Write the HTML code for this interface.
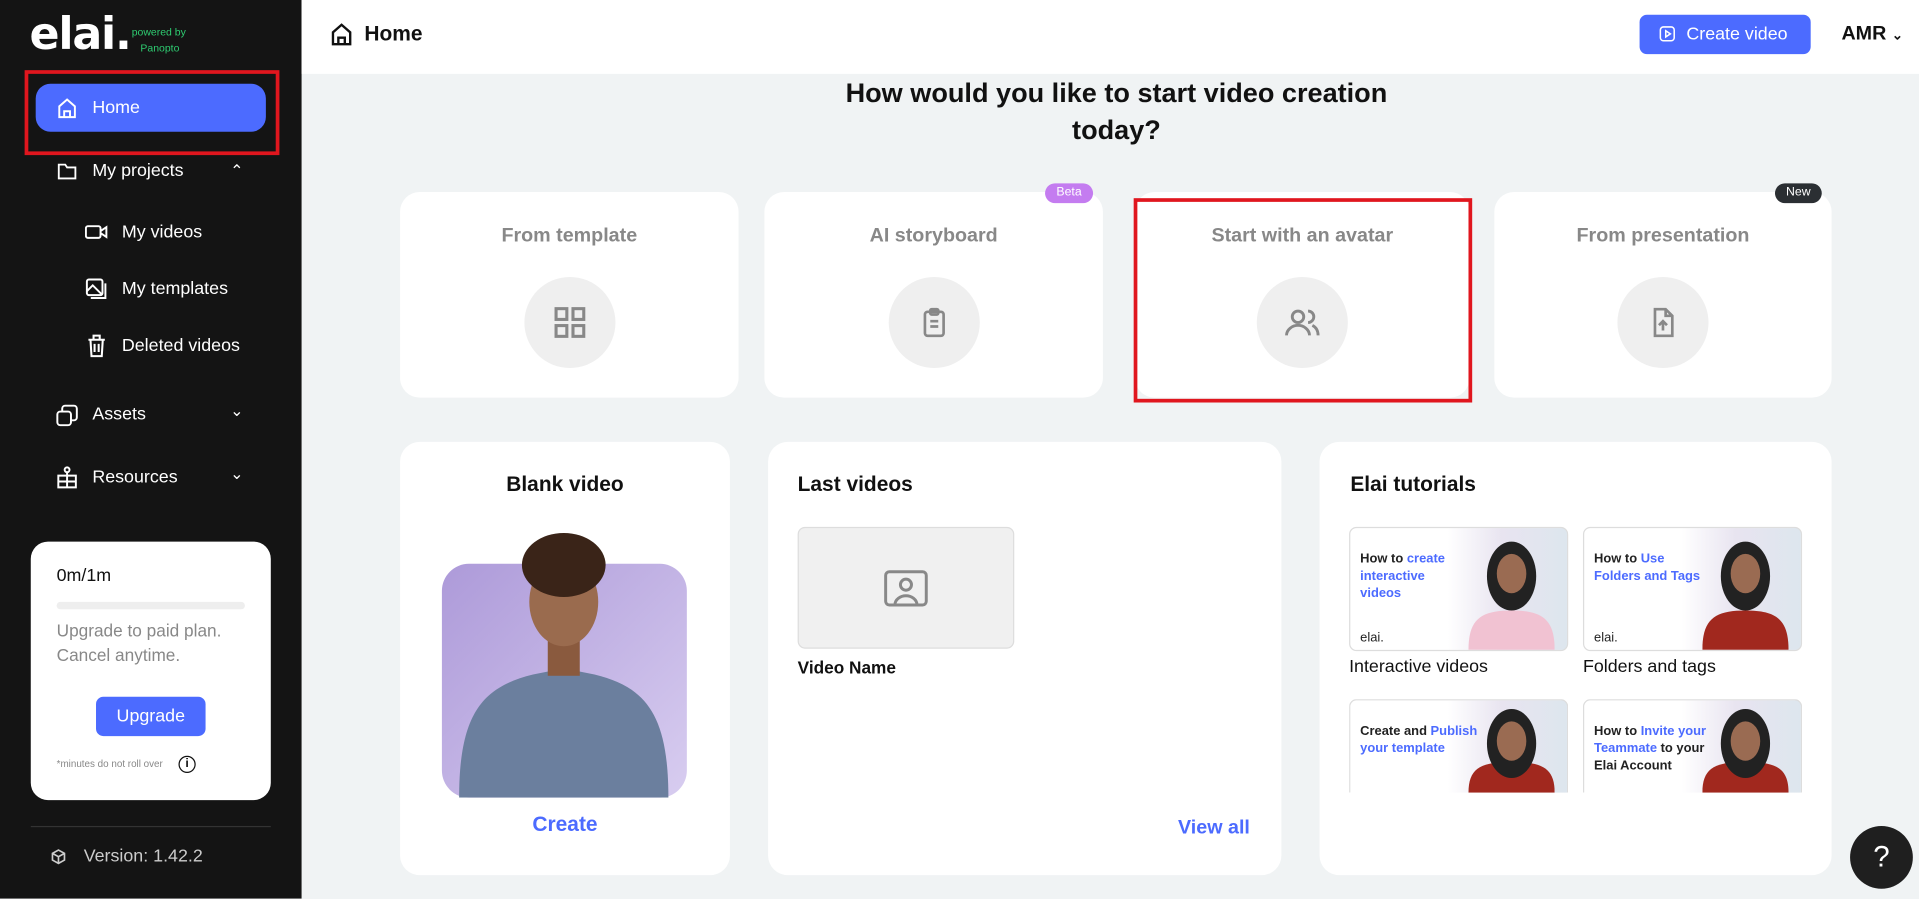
<!DOCTYPE html>
<html><head><meta charset="utf-8">
<style>
*{box-sizing:border-box;margin:0;padding:0}
html,body{width:1919px;height:894px;overflow:hidden;background:#f0f3f4;font-family:"Liberation Sans",sans-serif}
#w{position:absolute;left:0;top:0;width:1559px;height:730px;transform:scale(1.23092);transform-origin:0 0;background:#f0f3f4}
.a{position:absolute}
.sb{left:0;top:0;width:245px;height:730px;background:#141414;color:#fff}
.nav{font-size:14.5px;color:#fff}
.card{background:#fff;border-radius:16px;position:absolute}
.ct{font-size:16px;font-weight:bold;color:#888;width:100%;text-align:center;position:absolute;top:27px}
.circ{position:absolute;width:74px;height:74px;border-radius:50%;background:#efefef;left:50%;margin-left:-37px;top:69px;display:flex;align-items:center;justify-content:center}
.h{font-size:17px;font-weight:bold;color:#111}
.tut{position:absolute;width:178px;height:101px;border:1px solid #ddd;border-radius:6px;background:linear-gradient(90deg,#fff 45%,#e8e4f0 70%,#dde6ee);overflow:hidden;font-size:10.5px;font-weight:bold;color:#222;line-height:14px}
.tut .t{position:absolute;left:8px;top:18px;width:82px}
.tut b{color:#4c6bff}
.p{position:absolute;right:10px;bottom:0;width:70px;height:90px}
</style></head><body><div id="w">
<div class="a sb">
 <div class="a" style="left:24px;top:8px;font-size:36px;font-weight:bold;letter-spacing:-1px;font-family:'DejaVu Sans',sans-serif">elai.</div>
 <div class="a" style="left:107px;top:20px;font-size:8.5px;color:#2ecc71;line-height:13px">powered by<br>&nbsp;&nbsp;&nbsp;Panopto</div>
 <div class="a" style="left:20px;top:57px;width:207px;height:69px;border:3px solid #e0161e"></div>
 <div class="a" style="left:29px;top:68px;width:187px;height:39px;background:#4c6bff;border-radius:12px"></div>
 <svg class="a" style="left:45px;top:78px" width="19" height="20" viewBox="0 0 24 24" fill="none" stroke="#fff" stroke-width="2"><path d="M4 21V10l8-7 8 7v11zM9 21v-6h6v6"/></svg>
 <div class="a nav" style="left:75px;top:80px">Home</div>
 <svg class="a" style="left:45px;top:130px" width="19" height="18" viewBox="0 0 24 24" fill="none" stroke="#fff" stroke-width="2"><path d="M3 5h7l2 3h9v12H3z"/></svg>
 <div class="a nav" style="left:75px;top:131px">My projects</div>
 <div class="a nav" style="left:187px;top:131px;font-size:13px">&#8963;</div>
 <svg class="a" style="left:69px;top:181px" width="19" height="15" viewBox="0 0 24 18" fill="none" stroke="#fff" stroke-width="2"><rect x="1" y="3" width="15" height="12" rx="2"/><path d="M16 8l6-4v10l-6-4"/></svg>
 <div class="a nav" style="left:99px;top:181px">My videos</div>
 <svg class="a" style="left:69px;top:225px" width="19" height="20" viewBox="0 0 24 24" fill="none" stroke="#fff" stroke-width="2"><rect x="2" y="2" width="16" height="16" rx="2"/><path d="M2 14l6-6 10 10M21 6v15H6"/></svg>
 <div class="a nav" style="left:99px;top:227px">My templates</div>
 <svg class="a" style="left:70px;top:271px" width="17" height="20" viewBox="0 0 20 24" fill="none" stroke="#fff" stroke-width="2"><path d="M2 6h16M7 6V2h6v4M4 6l1 16h10l1-16M8 10v8M12 10v8"/></svg>
 <div class="a nav" style="left:99px;top:273px">Deleted videos</div>
 <svg class="a" style="left:45px;top:328px" width="19" height="19" viewBox="0 0 24 24" fill="none" stroke="#fff" stroke-width="2"><rect x="2" y="8" width="14" height="14" rx="3"/><path d="M7 8V5a3 3 0 013-3h9a3 3 0 013 3v9a3 3 0 01-3 3h-3"/></svg>
 <div class="a nav" style="left:75px;top:329px">Assets</div>
 <div class="a nav" style="left:187px;top:326px;font-size:13px">&#8964;</div>
 <svg class="a" style="left:45px;top:378px" width="19" height="20" viewBox="0 0 24 24" fill="none" stroke="#fff" stroke-width="2"><circle cx="12" cy="4" r="2.5"/><path d="M3 10h18v12H3zM12 7v15M3 16h18"/></svg>
 <div class="a nav" style="left:75px;top:380px">Resources</div>
 <div class="a nav" style="left:187px;top:377px;font-size:13px">&#8964;</div>
 <div class="a" style="left:25px;top:440px;width:195px;height:210px;background:#fff;border-radius:14px;color:#111">
  <div class="a" style="left:21px;top:20px;font-size:14.5px">0m/1m</div>
  <div class="a" style="left:21px;top:49px;width:153px;height:6px;background:#eee;border-radius:3px"></div>
  <div class="a" style="left:21px;top:62px;font-size:14px;color:#888;line-height:20px">Upgrade to paid plan.<br>Cancel anytime.</div>
  <div class="a" style="left:53px;top:126px;width:89px;height:32px;background:#4c6bff;border-radius:6px;color:#fff;font-size:14.5px;text-align:center;line-height:32px">Upgrade</div>
  <div class="a" style="left:21px;top:176px;font-size:8px;color:#888">*minutes do not roll over</div>
  <div class="a" style="left:120px;top:174px;width:14px;height:14px;border:1.5px solid #111;border-radius:50%;font-size:10px;font-weight:bold;text-align:center;line-height:11px">i</div>
 </div>
 <div class="a" style="left:25px;top:671px;width:195px;height:1px;background:#333"></div>
 <svg class="a" style="left:41px;top:689px" width="13" height="14" viewBox="0 0 24 24" fill="none" stroke="#ccc" stroke-width="2.5"><path d="M12 2l9 5v10l-9 5-9-5V7zM3 7l9 5 9-5M12 12v10"/></svg>
 <div class="a" style="left:68px;top:688px;font-size:14.5px;color:#ccc">Version: 1.42.2</div>
</div>
<div class="a" style="left:245px;top:0;width:1314px;height:60px;background:#fff"></div>
<svg class="a" style="left:267px;top:17px" width="21" height="22" viewBox="0 0 24 24" fill="none" stroke="#111" stroke-width="2.2"><path d="M4 21V10l8-7 8 7v11zM9 21v-6h6v6"/></svg>
<div class="a h" style="left:296px;top:18px">Home</div>
<div class="a" style="left:1332px;top:12px;width:139px;height:32px;background:#4c6bff;border-radius:6px;color:#fff;font-size:14.5px;line-height:32px;padding-left:38px">Create video</div>
<svg class="a" style="left:1347px;top:20px" width="15" height="15" viewBox="0 0 24 24" fill="none" stroke="#fff" stroke-width="2"><rect x="3" y="3" width="18" height="18" rx="4"/><path d="M10 8l6 4-6 4z"/></svg>
<div class="a" style="left:1496px;top:19px;font-size:16px;font-weight:bold;color:#111">AMR <span style="font-size:11px">&#8964;</span></div>
<div class="a" style="left:600px;top:61px;width:614px;text-align:center;font-size:22px;font-weight:bold;color:#111;line-height:30px">How would you like to start video creation<br>today?</div>

<div class="card" style="left:325px;top:156px;width:275px;height:167px"><div class="ct">From template</div><div class="circ"><svg width="30" height="30" viewBox="0 0 24 24" fill="none" stroke="#888" stroke-width="2"><rect x="3" y="3" width="7" height="7"/><rect x="14" y="3" width="7" height="7"/><rect x="3" y="14" width="7" height="7"/><rect x="14" y="14" width="7" height="7"/></svg></div></div>
<div class="card" style="left:621px;top:156px;width:275px;height:167px"><div class="ct">AI storyboard</div><div class="circ"><svg width="26" height="28" viewBox="0 0 24 24" fill="none" stroke="#888" stroke-width="2"><rect x="5" y="4" width="14" height="18" rx="2"/><rect x="9" y="2" width="6" height="4" rx="1"/><path d="M9 11h6M9 15h6"/></svg></div></div>
<div class="a" style="left:849px;top:149px;width:39px;height:16px;background:#c47cf0;border-radius:8px;color:#fff;font-size:10px;text-align:center;line-height:16px">Beta</div>
<div class="card" style="left:922px;top:156px;width:272px;height:167px"><div class="ct">Start with an avatar</div><div class="circ"><svg width="32" height="28" viewBox="0 0 26 24" fill="none" stroke="#888" stroke-width="2"><circle cx="10" cy="8" r="4"/><path d="M2 21c0-4 4-7 8-7s8 3 8 7M17 4a4 4 0 010 8M20 14c2 1 4 3 4 7"/></svg></div></div>
<div class="a" style="left:921px;top:161px;width:275px;height:166px;border:3px solid #e0161e"></div>
<div class="card" style="left:1214px;top:156px;width:274px;height:167px"><div class="ct">From presentation</div><div class="circ"><svg width="26" height="28" viewBox="0 0 24 24" fill="none" stroke="#888" stroke-width="2"><path d="M6 2h8l5 5v15H6zM14 2v5h5M12 18v-7M9 14l3-3 3 3"/></svg></div></div>
<div class="a" style="left:1442px;top:149px;width:38px;height:16px;background:#2b2f33;border-radius:8px;color:#fff;font-size:10px;text-align:center;line-height:16px">New</div>

<div class="card" style="left:325px;top:359px;width:268px;height:352px">
 <div class="a h" style="left:0;width:100%;text-align:center;top:25px">Blank video</div>
 <div class="a" style="left:34px;top:99px;width:199px;height:190px;border-radius:22px;background:linear-gradient(135deg,#ad9ad9,#d8cdf0)"></div>
 <svg class="a" style="left:34px;top:70px" width="199" height="219" viewBox="0 0 199 219"><path d="M14 219c0-70 20-90 60-100l25-5 25 5c40 10 60 30 60 100z" fill="#6b7f9e"/><rect x="86" y="90" width="26" height="30" fill="#8a5a3e"/><ellipse cx="99" cy="60" rx="28" ry="36" fill="#9a6b4e"/><ellipse cx="99" cy="30" rx="34" ry="26" fill="#3a2418"/></svg>
 <div class="a" style="left:0;width:100%;text-align:center;top:301px;font-size:17px;font-weight:bold;color:#4c6bff">Create</div>
</div>
<div class="card" style="left:624px;top:359px;width:417px;height:352px">
 <div class="a h" style="left:24px;top:25px">Last videos</div>
 <div class="a" style="left:24px;top:69px;width:176px;height:99px;background:#f0f0f0;border:1px solid #ddd;border-radius:6px;display:flex;align-items:center;justify-content:center"><svg width="36" height="30" viewBox="0 0 24 20" fill="none" stroke="#888" stroke-width="1.6"><rect x="1" y="1" width="22" height="18" rx="2"/><circle cx="12" cy="8" r="3"/><path d="M6 19c0-3 3-5 6-5s6 2 6 5"/></svg></div>
 <div class="a" style="left:24px;top:175px;font-size:14px;font-weight:bold;color:#111">Video Name</div>
 <div class="a" style="left:333px;top:305px;font-size:16px;font-weight:bold;color:#4c6bff">View all</div>
</div>
<div class="card" style="left:1072px;top:359px;width:416px;height:352px">
 <div class="a h" style="left:25px;top:25px">Elai tutorials</div>
 <div class="tut" style="left:24px;top:69px"><div class="t" style="width:78px">How to <b>create interactive videos</b></div><div class="a" style="left:8px;top:82px;font-weight:normal">elai.</div><svg class="p" viewBox="0 0 70 90"><path d="M0 90c0-25 10-32 35-32s35 7 35 32z" fill="#f1c2d2"/><ellipse cx="35" cy="30" rx="20" ry="28" fill="#222"/><ellipse cx="35" cy="28" rx="12" ry="16" fill="#9a6b52"/></svg></div>
 <div class="tut" style="left:214px;top:69px"><div class="t" style="width:95px">How to <b>Use</b><br><b>Folders and Tags</b></div><div class="a" style="left:8px;top:82px;font-weight:normal">elai.</div><svg class="p" viewBox="0 0 70 90"><path d="M0 90c0-25 10-32 35-32s35 7 35 32z" fill="#a1281e"/><ellipse cx="35" cy="30" rx="20" ry="28" fill="#222"/><ellipse cx="35" cy="28" rx="12" ry="16" fill="#9a6b52"/></svg></div>
 <div class="a" style="left:24px;top:175px;font-size:14.5px;color:#111">Interactive videos</div>
 <div class="a" style="left:214px;top:175px;font-size:14.5px;color:#111">Folders and tags</div>
 <div class="tut" style="left:24px;top:209px;height:76px;border-bottom:0;border-radius:6px 6px 0 0"><div class="t" style="width:110px">Create and <b>Publish your template</b></div><svg class="p" style="height:70px" viewBox="0 0 70 70"><path d="M0 70c0-20 10-25 35-25s35 5 35 25z" fill="#a1281e"/><ellipse cx="35" cy="30" rx="20" ry="28" fill="#222"/><ellipse cx="35" cy="28" rx="12" ry="16" fill="#9a6b52"/></svg></div>
 <div class="tut" style="left:214px;top:209px;height:76px;border-bottom:0;border-radius:6px 6px 0 0"><div class="t" style="width:100px">How to <b>Invite your Teammate</b> to your Elai Account</div><svg class="p" style="height:70px" viewBox="0 0 70 70"><path d="M0 70c0-20 10-25 35-25s35 5 35 25z" fill="#a1281e"/><ellipse cx="35" cy="30" rx="20" ry="28" fill="#222"/><ellipse cx="35" cy="28" rx="12" ry="16" fill="#9a6b52"/></svg></div>
</div>
<div class="a" style="left:1503px;top:671px;width:51px;height:51px;border-radius:50%;background:#1f1f1f;color:#fff;font-size:24px;text-align:center;line-height:51px">?</div>
</div></body></html>
